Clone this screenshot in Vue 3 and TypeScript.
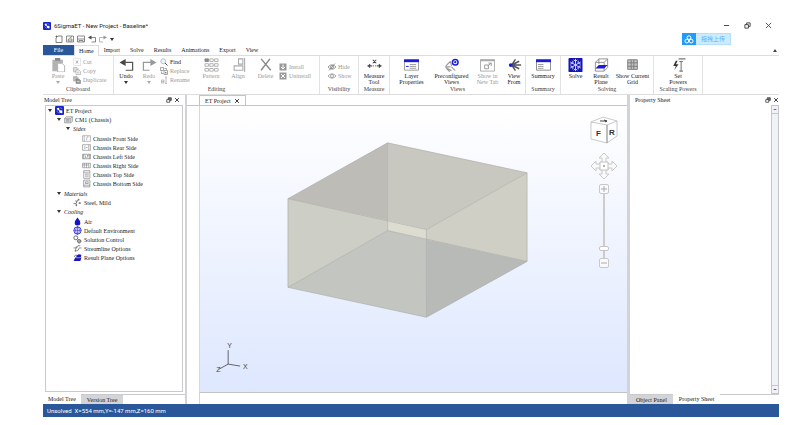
<script setup lang="ts">
import { ref } from 'vue'

interface Tool {
  id: string
  icon: string
  label: string
  off?: boolean
  menu?: boolean
}
interface Group {
  name: string
  caption: string
  cells: Tool[][]
}
interface Row {
  icon?: string
  label: string
  depth: number
  open?: boolean
  first?: boolean
}

const menus = ['Home', 'Import', 'Solve', 'Results', 'Animations', 'Export', 'View']
const activeMenu = ref('Home')
const zoom = ref(12)

const tool = (icon: string, label: string, off = false, menu = false): Tool => ({
  id: icon, icon, label, off, menu,
})

const groups: Group[] = [
  {
    name: 'clipboard', caption: 'Clipboard',
    cells: [
      [tool('paste', 'Paste', true, true)],
      [tool('cut', 'Cut', true), tool('copy', 'Copy', true), tool('duplicate', 'Duplicate', true)],
    ],
  },
  {
    name: 'editing', caption: 'Editing',
    cells: [
      [tool('undo', 'Undo', false, true)],
      [tool('redo', 'Redo', true, true)],
      [tool('find', 'Find'), tool('replace', 'Replace', true), tool('rename', 'Rename', true)],
      [tool('pattern', 'Pattern', true)],
      [tool('align', 'Align', true)],
      [tool('delete', 'Delete', true)],
      [tool('install', 'Install', true), tool('uninstall', 'Uninstall', true)],
    ],
  },
  {
    name: 'visibility', caption: 'Visibility',
    cells: [[tool('hide', 'Hide', true), tool('show', 'Show', true)]],
  },
  { name: 'measure', caption: 'Measure', cells: [[tool('measure', 'Measure\nTool')]] },
  {
    name: 'views', caption: 'Views',
    cells: [
      [tool('layer', 'Layer\nProperties')],
      [tool('preconf', 'Preconfigured\nViews')],
      [tool('newtab', 'Show in\nNew Tab', true)],
      [tool('viewfrom', 'View\nFrom')],
    ],
  },
  { name: 'summary', caption: 'Summary', cells: [[tool('summary', 'Summary')]] },
  {
    name: 'solving', caption: 'Solving',
    cells: [
      [tool('solve', 'Solve')],
      [tool('plane', 'Result\nPlane')],
      [tool('grid', 'Show Current\nGrid')],
    ],
  },
  { name: 'scaling', caption: 'Scaling Powers', cells: [[tool('power', 'Set\nPowers')]] },
]

const rows: Row[] = [
  { icon: 'logo', label: 'ET Project', depth: 0, open: true },
  { icon: 'chassis', label: 'CM1 (Chassis)', depth: 1, open: true },
  { label: 'Sides', depth: 2, open: true },
  { icon: 'front', label: 'Chassis Front Side', depth: 3, first: true },
  { icon: 'rear', label: 'Chassis Rear Side', depth: 3 },
  { icon: 'left', label: 'Chassis Left Side', depth: 3 },
  { icon: 'right', label: 'Chassis Right Side', depth: 3 },
  { icon: 'top', label: 'Chassis Top Side', depth: 3 },
  { icon: 'bottom', label: 'Chassis Bottom Side', depth: 3 },
  { label: 'Materials', depth: 1, open: true, first: true },
  { icon: 'steel', label: 'Steel, Mild', depth: 2 },
  { label: 'Cooling', depth: 1, open: true },
  { icon: 'air', label: 'Air', depth: 2, first: true },
  { icon: 'globe', label: 'Default Environment', depth: 2 },
  { icon: 'gears', label: 'Solution Control', depth: 2 },
  { icon: 'stream', label: 'Streamline Options', depth: 2 },
  { icon: 'planeopt', label: 'Result Plane Options', depth: 2 },
]
</script>

<template>
  <svg class="defs" aria-hidden="true">
    <symbol id="i-logo" viewBox="0 0 16 16">
      <rect width="16" height="16" rx="2" fill="#1824c8" />
      <path d="M3 4l4-1 1 4-3 1zM7 7l6 1v5l-5-1z" fill="#fff" />
      <path d="M3 9l4 4M9 3l4 2" stroke="#aab4ff" />
    </symbol>
    <symbol id="i-new" viewBox="0 0 16 16">
      <path d="M6 2h8v13H2V6M1 3h5M3 1v5" fill="none" stroke="#555" stroke-width="1.5" />
    </symbol>
    <symbol id="i-open" viewBox="0 0 16 16">
      <path d="M1 2h14v12H1zM4 12l1-4h7v4zM7 6l5-3" fill="none" stroke="#666" stroke-width="1.5" />
    </symbol>
    <symbol id="i-save" viewBox="0 0 16 16">
      <path d="M1 2h14v12H1zM1 8h14M4 14v-3h8v3" fill="none" stroke="#666" stroke-width="1.5" />
    </symbol>
    <symbol id="i-undo" viewBox="0 0 16 16">
      <path d="M7 1v8L0 5z" fill="#444" /><path d="M5 5h10v9H7" fill="none" stroke="#555" stroke-width="1.4" />
    </symbol>
    <symbol id="i-redo" viewBox="0 0 16 16">
      <path d="M9 1v8l7-4z" fill="#999" /><path d="M11 5H1v9h7" fill="none" stroke="#999" stroke-width="1.4" />
    </symbol>
    <symbol id="i-paste" viewBox="0 0 16 16">
      <path d="M1 2h12v4H7v9H1z" fill="#b3b3b3" /><path d="M4 0h6v3H4z" fill="#888" />
      <path d="M7 6h5l3 3v7H7z" fill="#fff" stroke="#aaa" />
    </symbol>
    <symbol id="i-cut" viewBox="0 0 16 16">
      <path d="M1 1h14v14H1z" fill="none" stroke="#ccc" /><path d="M6 5l4 6M10 5l-4 6" stroke="#999" stroke-width="1.5" />
    </symbol>
    <symbol id="i-copy" viewBox="0 0 16 16">
      <path d="M1 1h7l2 2v7H1z" fill="#ddd" stroke="#999" /><path d="M6 6h6l3 3v6H6z" fill="#fff" stroke="#888" />
      <path d="M8 10h5M8 12h5" stroke="#999" />
    </symbol>
    <symbol id="i-duplicate" viewBox="0 0 16 16">
      <path d="M1 1h7l2 2v7H1z" fill="#bbb" stroke="#999" /><path d="M6 6h6l3 3v6H6z" fill="#999" stroke="#777" />
      <path d="M8 11h5" stroke="#fff" />
    </symbol>
    <symbol id="i-find" viewBox="0 0 16 16">
      <circle cx="6.500" cy="6.500" r="5" fill="#eef3fb" stroke="#a3b0cc" stroke-width="1.500" />
      <path d="M10 10l5 5" stroke="#555" stroke-width="2" />
    </symbol>
    <symbol id="i-replace" viewBox="0 0 16 16">
      <path d="M1 1h6v6H1zM8 7h7v8H8zM9 3h4v3M3 9v4h4" fill="none" stroke="#888" stroke-width="1.500" />
      <path d="M10 10h3v3h-3z" fill="#888" />
    </symbol>
    <symbol id="i-rename" viewBox="0 0 16 16">
      <path d="M3 8h5v6H3zM3 11h5M12 2v13M10 2h4M10 15h4" fill="none" stroke="#aaa" stroke-width="1.500" />
    </symbol>
    <symbol id="i-pattern" viewBox="0 0 16 16">
      <path d="M.5 1h4v3h-4z" fill="#888" stroke="#888" />
      <path d="M6 1h4v3H6zM11.500 1h4v3h-4zM.5 6.500h4v3h-4zM6 6.500h4v3H6zM11.500 6.500h4v3h-4zM.5 12h4v3h-4zM6 12h4v3H6zM11.500 12h4v3h-4z" fill="#fff" stroke="#aaa" />
    </symbol>
    <symbol id="i-align" viewBox="0 0 16 16">
      <path d="M15 0v16M8 1h5v6H8zM3 9h10v5H3z" fill="none" stroke="#aaa" stroke-width="1.200" />
    </symbol>
    <symbol id="i-delete" viewBox="0 0 16 16">
      <path d="M3 1l11 13M13 1L3 14" stroke="#888" stroke-width="1.600" />
    </symbol>
    <symbol id="i-install" viewBox="0 0 16 16">
      <path d="M1 1h14v14H1z" fill="#999" /><path d="M8 3v8M4 8l4 4 4-4" fill="none" stroke="#fff" stroke-width="2" />
    </symbol>
    <symbol id="i-uninstall" viewBox="0 0 16 16">
      <path d="M1 1h14v14H1z" fill="#999" /><path d="M4 4l8 8M12 4l-8 8" stroke="#fff" stroke-width="2" />
    </symbol>
    <symbol id="i-hide" viewBox="0 0 16 16">
      <path d="M0 8q8-9 16 0q-8 9-16 0zM2 15L14 1" fill="none" stroke="#777" stroke-width="1.400" /><circle cx="8" cy="8" r="3" fill="none" stroke="#777" stroke-width="1.400" />
    </symbol>
    <symbol id="i-show" viewBox="0 0 16 16">
      <path d="M0 8q8-9 16 0q-8 9-16 0z" fill="none" stroke="#888" stroke-width="1.400" /><circle cx="8" cy="8" r="3" fill="none" stroke="#888" stroke-width="1.400" />
    </symbol>
    <symbol id="i-measure" viewBox="0 0 16 16">
      <path d="M0 9h5M11 9h5M3 7L1 9l2 2M13 7l2 2-2 2M6 9h1M9 9h1M6 2l4 4M10 2L6 6" fill="none" stroke="#444" stroke-width="1.200" />
    </symbol>
    <symbol id="i-layer" viewBox="0 0 16 14">
      <path d="M.5 1.500h15v11H.5z" fill="#fff" stroke="#999" /><path d="M0 1h16v3H0z" fill="#1b1bdc" />
      <path d="M6 6.500h7M6 8.500h7M6 10.500h7" stroke="#999" /><path d="M2 8.500h3" stroke="#1b1bdc" />
    </symbol>
    <symbol id="i-preconf" viewBox="0 0 16 14">
      <path d="M2 8l5-5M1 9h6M2 10l6 3M3 11l3 3M8 9l4 4M8 8l-1-5" stroke="#999" stroke-width="1.200" />
      <circle cx="12" cy="4" r="3" fill="#fff" stroke="#1b1bdc" stroke-width="1.600" /><circle cx="12" cy="4" r="1.200" fill="#1b1bdc" />
    </symbol>
    <symbol id="i-newtab" viewBox="0 0 16 14">
      <path d="M.5 1.500h15v12H.5z" fill="#fff" stroke="#aaa" /><path d="M0 1h16v2H0z" fill="#aaa" />
      <path d="M5 7h4v4H5zM8 8l4-3M9 5h3v3" fill="none" stroke="#999" />
    </symbol>
    <symbol id="i-viewfrom" viewBox="0 0 16 14">
      <path d="M5 7l4-6M5 7l8-4M5 7h10M5 7l8 4M5 7l4 6" stroke="#555" stroke-width="1.500" />
      <circle cx="4" cy="7" r="2" fill="#1b1bdc" />
    </symbol>
    <symbol id="i-summary" viewBox="0 0 16 14">
      <path d="M.5 1.500h15v11H.5z" fill="#fff" stroke="#888" /><path d="M0 1h16v3H0z" fill="#1b1bdc" />
      <path d="M2 6.500h6M2 8.500h6M2 10.500h6" stroke="#999" />
    </symbol>
    <symbol id="i-solve" viewBox="0 0 16 16">
      <rect width="16" height="16" rx="1" fill="#1515b8" />
      <path d="M8 1v14M2 4.500l12 7M14 4.500l-12 7M6 2l2 2 2-2M6 14l2-2 2 2M2 7l3-1V3M14 9l-3 1v3M2 9l3 1v3M14 7l-3-1V3" fill="none" stroke="#dfe4ff" />
    </symbol>
    <symbol id="i-plane" viewBox="0 0 16 16">
      <path d="M1 5l4-4h10v10l-4 4H1zM1 5h10v10M11 5l4-4M5 1v6" fill="none" stroke="#888" />
      <path d="M1 12l4-4h10l-4 4z" fill="#1b1bdc" />
    </symbol>
    <symbol id="i-grid" viewBox="0 0 16 16">
      <path d="M2.500 2h11v11h-11z" fill="#c4c4c4" />
      <path d="M2.500 2h11v11h-11zM2.500 5.500h11M2.500 9.500h11M6.500 2v11M9.500 2v11" fill="none" stroke="#777" />
    </symbol>
    <symbol id="i-power" viewBox="0 0 16 16">
      <path d="M5 3L2 9h3l-2 5 5-7H5l2-4z" fill="#333" />
      <path d="M11 4v11M9 4h4M9 15h4M8 1h8" fill="none" stroke="#777" stroke-width="1.200" />
    </symbol>
    <symbol id="i-chassis" viewBox="0 0 16 16">
      <path d="M1 6l3-3h11v8l-3 3H1zM1 6h11v8M12 6l3-3M3 8h7M3 10h7M3 12h7" fill="#eee" stroke="#777" />
    </symbol>
    <symbol id="i-front" viewBox="0 0 16 16">
      <path d="M1 3h14v10H1zM4 3v10M8 11l1-6h3" fill="none" stroke="#888" />
    </symbol>
    <symbol id="i-rear" viewBox="0 0 16 16">
      <path d="M1 3h14v10H1zM12 3v10M5 5v6M7 8h3" fill="none" stroke="#777" />
    </symbol>
    <symbol id="i-left" viewBox="0 0 16 16">
      <path d="M1 4h14v8H1zM3 4v8M6 6v4h2M10 6v4M13 4v8M9 6h3" fill="none" stroke="#666" />
    </symbol>
    <symbol id="i-right" viewBox="0 0 16 16">
      <path d="M1 4h14v8H1zM4 4v8M8 4v8M12 4v8M1 7h11" fill="none" stroke="#777" />
    </symbol>
    <symbol id="i-top" viewBox="0 0 16 16">
      <path d="M3 1h11v14H3zM3 4h11M5 7h7M5 9h7M5 12h7" fill="none" stroke="#777" />
    </symbol>
    <symbol id="i-bottom" viewBox="0 0 16 16">
      <path d="M3 2h11v12H3zM3 11h11M6 5h5v3H6z" fill="none" stroke="#666" />
    </symbol>
    <symbol id="i-steel" viewBox="0 0 16 16">
      <path d="M1 10h4l4-7M6 10v4M10 9h4M7 6L4 5" fill="none" stroke="#666" stroke-width="1.500" />
      <circle cx="10" cy="3" r="1.500" fill="#777" /><circle cx="12" cy="9" r="1.500" fill="#777" /><circle cx="6" cy="13" r="1.500" fill="#777" />
    </symbol>
    <symbol id="i-air" viewBox="0 0 16 16">
      <path d="M8 1q5 6 5 9.500a5 4.500 0 0 1-10 0Q3 7 8 1z" fill="#1414cc" />
    </symbol>
    <symbol id="i-globe" viewBox="0 0 16 16">
      <circle cx="8" cy="8" r="6.500" fill="#dfe3ff" stroke="#2a2ad6" stroke-width="1.500" />
      <path d="M8 1v14M1 8h14M8 1q-7 7 0 14M8 1q7 7 0 14" fill="none" stroke="#2a2ad6" />
    </symbol>
    <symbol id="i-gears" viewBox="0 0 16 16">
      <circle cx="5" cy="5" r="3.500" fill="none" stroke="#555" stroke-width="1.500" /><circle cx="11" cy="11" r="3" fill="none" stroke="#555" stroke-width="1.500" />
      <path d="M11 7v8M7 11h8" stroke="#666" />
    </symbol>
    <symbol id="i-stream" viewBox="0 0 16 16">
      <path d="M1 7h4q3 0 4-4h4M3 12h3q4 0 5-5h4M6 4L4 14" fill="none" stroke="#666" stroke-width="1.300" />
    </symbol>
    <symbol id="i-planeopt" viewBox="0 0 16 16">
      <path d="M1 14l3-6h11l-2 6zM6 5l4-3 5 1-1 4H6z" fill="#1616c8" /><path d="M2 7l2-3h3M6 9h6" fill="none" stroke="#666" stroke-width="1.500" />
    </symbol>
    <symbol id="i-float" viewBox="0 0 16 16">
      <path d="M6 2h8v7H6z" fill="#777" stroke="#333" stroke-width="2" /><path d="M2 7h8v7H2z" fill="#fff" stroke="#333" stroke-width="2" />
    </symbol>
    <symbol id="i-x" viewBox="0 0 16 16">
      <path d="M3 3l10 10M13 3L3 13" stroke="#333" stroke-width="2.500" />
    </symbol>
  </svg>

  <div class="window">
    <header class="title">
      <svg class="s8"><use href="#i-logo" /></svg>
      <h1>6SigmaET - New Project - Baseline*</h1>
      <div class="winctl">
        <button aria-label="Minimize"><svg viewBox="0 0 8 8"><path d="M1 4h6" stroke="#333" /></svg></button>
        <button aria-label="Restore"><svg viewBox="0 0 8 8"><path d="M1 3h4v4H1zM3 3V1h4v4H5" fill="none" stroke="#333" /></svg></button>
        <button aria-label="Close"><svg viewBox="0 0 8 8"><path d="M1 1l6 6M7 1L1 7" stroke="#444" /></svg></button>
      </div>
    </header>

    <div class="quick">
      <button aria-label="New"><svg class="s8"><use href="#i-new" /></svg></button>
      <button aria-label="Open"><svg class="s8"><use href="#i-open" /></svg></button>
      <button aria-label="Save"><svg class="s8"><use href="#i-save" /></svg></button>
      <button aria-label="Undo last"><svg class="s8"><use href="#i-undo" /></svg></button>
      <button aria-label="Redo last"><svg class="s8"><use href="#i-redo" /></svg></button>
      <button aria-label="Customize"><i class="caret" /></button>
      <button class="upload">
        <span class="cloud">
          <svg viewBox="0 0 16 14"><g fill="none" stroke="#fff" stroke-width="1.6"><circle cx="8" cy="4" r="3" /><circle cx="4.500" cy="9.500" r="3" /><circle cx="11.500" cy="9.500" r="3" /></g></svg>
        </span>
        <span class="uptext">拖拽上传</span>
      </button>
    </div>

    <nav class="menus">
      <button class="file">File</button>
      <button v-for="m in menus" :key="m" :class="{ on: m === activeMenu }" @click="activeMenu = m">{{ m }}</button>
      <button class="fold" aria-label="Collapse ribbon"><i class="caret up" /></button>
    </nav>

    <section class="ribbon">
      <div v-for="g in groups" :key="g.name" class="group" :class="g.name">
        <div class="cells">
          <div v-for="(c, n) in g.cells" :key="n" class="cell" :class="{ stack: c.length > 1 }">
            <button v-for="t in c" :key="t.id" :class="{ off: t.off }">
              <svg><use :href="'#i-' + t.icon" /></svg>
              <span>{{ t.label }}</span>
              <i v-if="t.menu" class="caret" />
            </button>
          </div>
        </div>
        <div class="caption">{{ g.caption }}</div>
      </div>
    </section>

    <main>
      <aside class="left">
        <div class="head">
          <h2>Model Tree</h2>
          <button aria-label="Float tree"><svg><use href="#i-float" /></svg></button>
          <button aria-label="Close tree"><svg><use href="#i-x" /></svg></button>
        </div>
        <ul class="tree">
          <li v-for="r in rows" :key="r.label" :class="['d' + r.depth, { first: r.first, cat: !r.icon }]">
            <span class="twist"><i v-if="r.open" class="caret" /></span>
            <svg v-if="r.icon"><use :href="'#i-' + r.icon" /></svg>
            <span>{{ r.label }}</span>
          </li>
        </ul>
        <div class="tabs">
          <button class="on">Model Tree</button>
          <button>Version Tree</button>
        </div>
      </aside>

      <section class="center">
        <div class="docs">
          <div class="doc"><span>ET Project</span><button aria-label="Close document"><svg><use href="#i-x" /></svg></button></div>
        </div>
        <div class="canvas">
          <svg class="scene" viewBox="199 105 428 287">
            <polygon points="287,198 387,220 387,230 287,287" fill="#cdcec5" />
            <polygon points="287,198 387,142 387,220" fill="#bdbcb6" />
            <polygon points="387,142 527,172 426,229 387,220" fill="#c9c8c0" />
            <polygon points="387,220 426,229 426,239 387,230" fill="#dcdcd0" />
            <polygon points="426,229 527,172 527,261 426,239" fill="#cfcfc6" />
            <polygon points="287,287 387,230 426,239 426,317" fill="#c3c5c0" />
            <polygon points="426,239 527,261 426,317" fill="#b8bab8" />
            <path d="M287 198L387 142L527 172L426 229ZM287 287L387 230L527 261L426 317ZM287 198V287M387 142V230M527 172V261M426 229V317" fill="none" stroke="#a9a9a3" stroke-width=".6" />
            <path d="M227 350V364L239 366M227 364L218 369" fill="none" stroke="#444" stroke-width=".8" />
            <g class="axis"><text x="226" y="348">Y</text><text x="242" y="369">X</text><text x="215" y="372">Z</text></g>
          </svg>
          <div class="navi">
            <button class="cube" aria-label="Orientation">
              <svg viewBox="0 0 28 28">
                <path d="M1 6L13 1L27 5L17 9ZM1 6V23L17 27V9M17 27L27 20V5" fill="#fff" stroke="#bbb" stroke-width=".8" />
                <path d="M17 9V27" stroke="#999" /><path d="M10 5h7M14 4l3 1-2 1" fill="none" stroke="#444" />
                <text x="6" y="20">F</text><text x="19" y="19">R</text>
              </svg>
            </button>
            <button class="pan" aria-label="Pan">
              <svg viewBox="0 0 28 28">
                <path d="M14 1L19 6H16V10H18V12H22V9L27 14L22 19V16H18V18H16V22H19L14 27L9 22H12V18H10V16H6V19L1 14L6 9V12H10V10H12V6H9Z" fill="#fafafa" stroke="#c8c8c8" />
                <rect x="10" y="10" width="8" height="8" rx="1" fill="#fff" stroke="#c4c4c4" /><circle cx="14" cy="14" r="1" fill="#999" />
              </svg>
            </button>
            <button class="step" aria-label="Zoom in"><svg viewBox="0 0 8 8"><path d="M1 4h6M4 1v6" stroke="#aaa" /></svg></button>
            <input v-model="zoom" type="range" min="0" max="100" aria-label="Zoom" />
            <button class="step" aria-label="Zoom out"><svg viewBox="0 0 8 8"><path d="M1 4h6" stroke="#aaa" /></svg></button>
          </div>
        </div>
        <div class="foot" />
      </section>

      <aside class="right">
        <div class="head">
          <h2>Property Sheet</h2>
          <button aria-label="Float sheet"><svg><use href="#i-float" /></svg></button>
          <button aria-label="Close sheet"><svg><use href="#i-x" /></svg></button>
        </div>
        <div class="sheet">
          <div class="bar">
            <button aria-label="Scroll up"><i class="caret up" /></button>
            <button aria-label="Scroll down"><i class="caret" /></button>
          </div>
        </div>
        <div class="tabs">
          <button>Object Panel</button>
          <button class="on">Property Sheet</button>
        </div>
      </aside>
    </main>

    <footer>Unsolved&nbsp; X=554 mm,Y=-147 mm,Z=160 mm</footer>
  </div>
</template>

<style>
body {
  background: #fff;
}
</style>

<style scoped>
.defs {
  display: none;
}
.window {
  box-sizing: border-box;
  height: 100vh;
  min-height: 400px;
  padding: 18px 15px 8px 43px;
  display: flex;
  flex-direction: column;
  font: 6px/6px "Liberation Serif", "Noto Sans CJK SC", serif;
  color: #222;
}
button {
  border: 0;
  padding: 0;
  margin: 0;
  background: none;
  font: inherit;
  color: inherit;
}
svg {
  display: block;
  flex: none;
}
h1,
h2 {
  margin: 0;
  font-size: 6px;
  font-weight: 400;
}
.s8 {
  width: 8px;
  height: 8px;
}
.caret {
  display: block;
  border: 2px solid transparent;
  border-top: 3px solid #333;
  border-bottom: 0;
}
.caret.up {
  border-top: 0;
  border-bottom: 3px solid #444;
}

.title {
  display: flex;
  align-items: center;
  gap: 3px;
  height: 15px;
}
.title h1 {
  font-family: Roboto, sans-serif;
  line-height: 8px;
}
.winctl {
  margin-left: auto;
  display: flex;
  gap: 14px;
  padding-right: 7px;
}
.winctl svg {
  width: 7px;
  height: 7px;
}

.quick {
  display: flex;
  align-items: center;
  gap: 3px;
  height: 12px;
  padding-left: 12px;
}
.upload {
  box-sizing: border-box;
  margin-left: auto;
  margin-right: 48px;
  display: flex;
  height: 12px;
  width: 49px;
  background: #cdebff;
  border: 1px solid #b3dffc;
  border-left: 0;
  border-radius: 1px;
}
.cloud {
  width: 14px;
  height: 12px;
  margin-top: -1px;
  background: #229cfc;
  display: grid;
  place-items: center;
}
.cloud svg {
  width: 10px;
  height: 9px;
}
.uptext {
  flex: 1;
  line-height: 10px;
  color: #5bb5f8;
}

.menus {
  display: flex;
  height: 10px;
  border-bottom: 1px solid #ddd;
}
.menus button {
  padding: 0 5px;
}
.menus .file {
  width: 31px;
  background: #2a579a;
  color: #fff;
}
.menus .on {
  height: 11px;
  border: 1px solid #ddd;
  border-bottom: 0;
  background: #fff;
  padding: 0 4px;
}
.menus .fold {
  margin-left: auto;
  padding: 0 2px;
}

.ribbon {
  display: flex;
  height: 38px;
  border-bottom: 1px solid #ddd;
}
.group {
  box-sizing: border-box;
  border-right: 1px solid #e2e2e2;
  display: flex;
  flex-direction: column;
}
.cells {
  flex: 1;
  display: grid;
}
.caption {
  text-align: center;
  height: 8px;
  color: #444;
  white-space: nowrap;
}
.clipboard { width: 71px; }
.clipboard .cells { grid-template-columns: 30px 1fr; }
.editing { width: 206px; }
.editing .cells { grid-template-columns: 24px 22px 38px 26px 28px 27px 1fr; }
.visibility { width: 39px; }
.visibility .cells { padding-left: 8px; }
.measure { width: 31px; }
.views { width: 136px; }
.views .cells { grid-template-columns: 43px 37px 35px 18px; }
.summary { width: 35px; }
.solving { width: 93px; }
.solving .cells { grid-template-columns: 29px 22px 1fr; }
.scaling { width: 49px; }

.cell button {
  width: 100%;
  display: flex;
  flex-direction: column;
  align-items: center;
  padding-top: 2px;
}
.cell svg {
  width: 15px;
  height: 14px;
}
.cell span {
  white-space: pre;
  text-align: center;
}
.cell .caret {
  margin-top: 2px;
}
.cell .off {
  color: #999;
}
.off .caret {
  border-top-color: #aaa;
}
.cell:not(.stack) span {
  margin-top: 1px;
}
.stack {
  display: flex;
  flex-direction: column;
  justify-content: center;
}
.stack button {
  flex-direction: row;
  gap: 2px;
  height: 9px;
  padding: 0;
}
.stack svg {
  width: 8px;
  height: 8px;
}

main {
  flex: 1;
  min-height: 0;
  display: flex;
}
aside {
  display: flex;
  flex-direction: column;
}
.left {
  width: 142px;
  border-right: 2px solid #d2d3d6;
}
.head {
  display: flex;
  align-items: center;
  height: 10px;
  gap: 2px;
  padding: 0 5px 0 1px;
}
.head h2 {
  flex: 1;
}
.head svg {
  width: 6px;
  height: 6px;
}
.tree {
  flex: 1;
  margin: 0 2px 2px;
  padding: 0;
  border: 1px solid #c9cacc;
  list-style: none;
}
.tree li {
  display: flex;
  align-items: center;
  height: 9px;
}
.tree li svg {
  width: 9px;
  height: 9px;
  margin-right: 2px;
}
.tree .first {
  margin-top: 1px;
}
.tree .cat {
  font-style: italic;
}
.twist {
  width: 9px;
  padding-left: 2px;
  box-sizing: border-box;
}
.twist .caret {
  width: 0;
}
.d1 { padding-left: 9px; }
.d2 { padding-left: 18px; }
.d3 { padding-left: 27px; }

.tabs {
  display: flex;
  height: 9px;
  border-top: 1px solid #c9cacc;
}
.tabs button {
  padding: 0 6px;
  background: #d3d4d7;
}
.tabs .on {
  background: #fff;
  margin-top: -1px;
}
.left .on {
  padding: 0 5px;
}

.center {
  flex: 1;
  min-width: 0;
  display: flex;
  flex-direction: column;
}
.docs {
  height: 10px;
  padding-left: 12px;
  display: flex;
  border-bottom: 1px solid #c4c4c4;
}
.doc {
  display: flex;
  align-items: center;
  gap: 3px;
  padding: 0 5px;
  border: 1px solid #c4c4c4;
  border-bottom: 0;
}
.doc svg {
  width: 6px;
  height: 6px;
}
.canvas {
  flex: 1;
  min-height: 0;
  position: relative;
  margin-left: 12px;
  border-left: 1px solid #d5d9e2;
  background: linear-gradient(#fff, #dde7fe);
}
.scene {
  width: 100%;
  height: 100%;
}
.axis {
  font: 7px "Liberation Sans", sans-serif;
  fill: #444;
}
.foot {
  height: 11px;
  margin-left: 12px;
  border-left: 1px solid #d5d5d5;
  border-top: 1px solid #c4c4c4;
}
.navi {
  position: absolute;
  top: 10px;
  right: 9px;
  width: 28px;
  display: flex;
  flex-direction: column;
  align-items: center;
}
.cube svg,
.pan svg {
  width: 28px;
  height: 28px;
}
.cube text {
  font: 700 8px "Liberation Sans", sans-serif;
  fill: #333;
}
.pan {
  margin: 8px 0 4px;
}
.step {
  box-sizing: border-box;
  width: 10px;
  height: 10px;
  border: 1px solid #c8c8c8;
  border-radius: 2px;
  background: #fafafa;
}
.navi input {
  appearance: none;
  writing-mode: vertical-lr;
  direction: rtl;
  width: 10px;
  height: 64px;
  margin: 0;
  background: linear-gradient(#ccc, #ccc) center / 2px 100% no-repeat;
}
.navi input::-webkit-slider-thumb {
  appearance: none;
  box-sizing: border-box;
  width: 10px;
  height: 5px;
  border: 1px solid #c4c4c4;
  border-radius: 2px;
  background: #fff;
}

.right {
  width: 149px;
  border-left: 3px solid #d2d3d6;
}
.right .head {
  padding: 0 0 0 5px;
}
.sheet {
  flex: 1;
  display: flex;
  justify-content: flex-end;
}
.bar {
  box-sizing: border-box;
  width: 8px;
  display: flex;
  flex-direction: column;
  justify-content: space-between;
  background: #f1f2f7;
  border: 1px solid #c5c6ca;
}
.bar button {
  height: 8px;
  padding: 0 1px;
  border: 0 solid #c5c6ca;
  border-bottom-width: 1px;
}
.bar button + button {
  border-width: 1px 0 0;
}
.bar .caret {
  border-width: 1px 2px;
}

footer {
  height: 13px;
  padding-left: 4px;
  background: #2a579a;
  color: #fff;
  font: 6px/13px Roboto, sans-serif;
}
</style>
